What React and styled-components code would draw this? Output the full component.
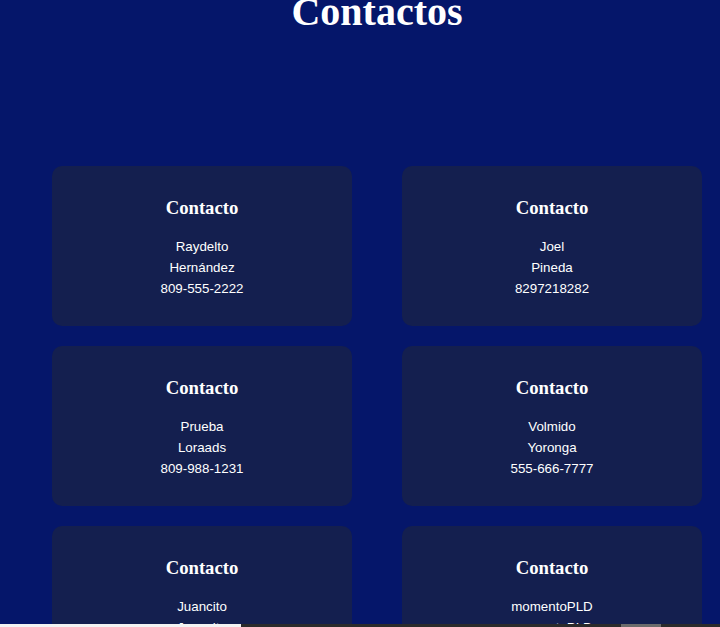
import React from 'react';
import styled, { createGlobalStyle } from 'styled-components';

const GlobalStyle = createGlobalStyle`
  html, body {
    margin: 0;
    padding: 0;
    overflow: hidden;
    background: #05166a;
  }
  body {
    font-family: "Liberation Serif", "Times New Roman", serif;
  }
`;

const Page = styled.div`
  min-height: 627px;
  padding-left: 52px;
  background: #05166a;
`;

const Content = styled.div`
  width: 650px;
`;

const Title = styled.h1`
  margin: -12px 0 131px;
  font-family: "Liberation Serif", "Times New Roman", serif;
  font-size: 40px;
  font-weight: bold;
  line-height: normal;
  color: #ffffff;
  text-align: center;
`;

const CardGrid = styled.div`
  display: grid;
  grid-template-columns: 300px 300px;
  column-gap: 50px;
  row-gap: 20px;
`;

const Card = styled.div`
  box-sizing: border-box;
  height: 160px;
  padding-top: 31px;
  border-radius: 10px;
  background: #141f4f;
  text-align: center;
  color: #ffffff;
`;

const CardTitle = styled.h3`
  margin: 0 0 18px;
  font-family: "Liberation Serif", "Times New Roman", serif;
  font-size: 18.72px;
  font-weight: bold;
  line-height: 21px;
`;

const Line = styled.div`
  font-family: "Liberation Sans", Arial, sans-serif;
  font-size: 13.33px;
  line-height: 21px;
`;

const TaskBar = styled.div`
  position: fixed;
  left: 0;
  right: 0;
  bottom: 0;
  height: 3px;
  display: flex;
  background: #2b2b2b;
`;

const BarSegment = styled.div`
  width: ${(p) => p.w}px;
  margin-left: ${(p) => p.ml || 0}px;
  background: ${(p) => p.color};
`;

const contacts = [
  { nombre: 'Raydelto', apellido: 'Hernández', telefono: '809-555-2222' },
  { nombre: 'Joel', apellido: 'Pineda', telefono: '8297218282' },
  { nombre: 'Prueba', apellido: 'Loraads', telefono: '809-988-1231' },
  { nombre: 'Volmido', apellido: 'Yoronga', telefono: '555-666-7777' },
  { nombre: 'Juancito', apellido: 'Juancito', telefono: '809-000-0000' },
  { nombre: 'momentoPLD', apellido: 'momentoPLD', telefono: '809-111-1111' },
];

const App = () => (
  <>
    <GlobalStyle />
    <Page>
      <Content>
        <Title>Contactos</Title>
        <CardGrid>
          {contacts.map((c) => (
            <Card key={c.nombre + c.telefono}>
              <CardTitle>Contacto</CardTitle>
              <Line>{c.nombre}</Line>
              <Line>{c.apellido}</Line>
              <Line>{c.telefono}</Line>
            </Card>
          ))}
        </CardGrid>
      </Content>
    </Page>
    <TaskBar>
      <BarSegment w={241} color="#f3f3f3" />
      <BarSegment w={40} ml={380} color="#6b6b6b" />
    </TaskBar>
  </>
);

export default App;
